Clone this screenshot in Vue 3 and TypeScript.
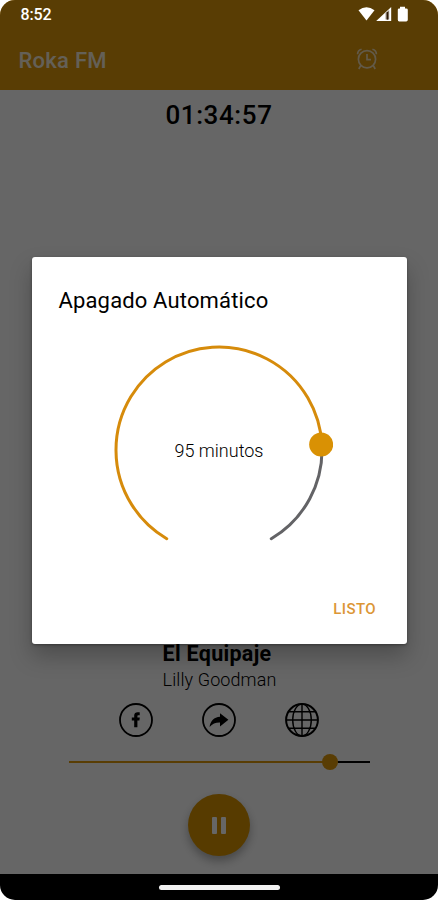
<script setup lang="ts">
import { computed, ref } from 'vue'

const minutes = ref(95)
const volume = ref(86.9)

const cx = 108
const cy = 108
const radius = 103

function pointAt(degrees: number): { x: number; y: number } {
  const rad = (degrees * Math.PI) / 180
  return { x: cx + radius * Math.cos(rad), y: cy + radius * Math.sin(rad) }
}

function arc(from: number, to: number): string {
  const a = pointAt(from)
  const b = pointAt(to)
  const large = to - from > 180 ? 1 : 0
  return `M${a.x} ${a.y}A${radius} ${radius} 0 ${large} 1 ${b.x} ${b.y}`
}

const startAngle = 120.5
const endAngle = 419.5
const angle = computed(() => startAngle + (minutes.value / 120) * 300 - 1)
const knob = computed(() => pointAt(angle.value))
</script>

<template>
  <div class="phone">
    <div class="status">
      <span class="clock">8:52</span>
      <svg class="signals" width="50" height="18" viewBox="0 0 50 18">
        <path d="M0.5 4.2Q8.5-1.6 16.5 4.2L8.5 14.6Z" fill="#fff" />
        <path d="M33.2 1V15H18.2Z" fill="#fff" />
        <path d="M27.6 7L31.2 4V13.6H27.6Z" fill="#8d7f70" />
        <rect x="28.8" y="6" width="1.4" height="7.6" fill="#2c1a08" />
        <path d="M42 0.8H47V2.4H48.2Q49.8 2.4 49.8 3.8V13.8Q49.8 15.4 48.2 15.4H41.2Q39.8 15.4 39.8 13.8V3.8Q39.8 2.4 41.2 2.4H42Z" fill="#fff" />
      </svg>
    </div>

    <header class="bar">
      <h1>Roka FM</h1>
      <svg class="alarm" width="24" height="24" viewBox="0 0 24 24">
        <g fill="none" stroke="#fff" stroke-width="1.7">
          <circle cx="12" cy="12.2" r="8.6" />
          <path d="M12 7V12.6H16" />
          <path d="M2.6 7.2Q2.6 3.2 6.6 2.2M21.4 7.2Q21.4 3.2 17.4 2.2" />
          <path d="M5.8 18.4L3.8 22M18.2 18.4L20.2 22" />
        </g>
      </svg>
    </header>

    <main class="player">
      <div class="timer">01:34:57</div>
      <div class="cover"></div>
      <div class="song">El Equipaje</div>
      <div class="artist">Lilly Goodman</div>

      <div class="links">
        <svg width="36" height="36" viewBox="0 0 36 36">
          <circle cx="18" cy="18" r="16" fill="none" stroke="#000" stroke-width="1.8" />
          <path d="M16.2 25.3V18.6H13.8V15.6H16.2V13.6C16.2 11 17.6 10.2 19.6 10.2H21.7V13.2H20.4C19.6 13.2 19.4 13.6 19.4 14.3V15.6H21.8L21.4 18.6H19.4V25.3Z" />
        </svg>
        <svg width="36" height="36" viewBox="0 0 36 36">
          <circle cx="18" cy="18" r="16" fill="none" stroke="#000" stroke-width="1.8" />
          <path d="M19 11.2L27.4 17.8L19 24.4V20.6C14.6 20.5 11.4 21.7 8.6 25C9.4 19 13 15.2 19 14.8Z" />
        </svg>
        <svg width="36" height="36" viewBox="0 0 36 36">
          <g fill="none" stroke="#000" stroke-width="1.4">
            <circle cx="18" cy="18" r="15.9" stroke-width="2" />
            <ellipse cx="18" cy="18" rx="9.3" ry="15.9" />
            <path d="M18 2V34M2 18H34M4.6 9.8H31.4M4.6 26.2H31.4" />
          </g>
        </svg>
      </div>

      <div class="slider">
        <div class="filled" :style="{ width: volume + '%' }"></div>
        <div class="thumb"></div>
        <div class="rest"></div>
      </div>

      <button class="pause" type="button" aria-label="Pausa">
        <span></span><span></span>
      </button>
    </main>

    <div class="scrim">
      <section class="dialog">
        <h2>Apagado Automático</h2>
        <div class="dial">
          <svg width="222" height="216" viewBox="0 0 222 216">
            <g fill="none" stroke-width="3" stroke-linecap="round">
              <path :d="arc(angle, endAngle)" stroke="#636366" />
              <path :d="arc(startAngle, angle)" stroke="#d68b0b" />
            </g>
            <circle :cx="knob.x - 0.7" :cy="knob.y" r="12" fill="#d99104" />
          </svg>
          <span class="minutes">{{ minutes }} minutos</span>
        </div>
        <button class="done" type="button">LISTO</button>
      </section>
    </div>

    <footer class="nav"><div class="pill"></div></footer>
  </div>
</template>

<style>
body {
  background: #fff;
}
</style>

<style scoped>
* {
  box-sizing: border-box;
}

.phone {
  position: relative;
  display: flex;
  flex-direction: column;
  width: 438px;
  height: 900px;
  overflow: hidden;
  border-radius: 15px;
  background: #fff;
  font-family: Roboto, sans-serif;
  color: #000;
}

h1,
h2 {
  margin: 0;
}

button {
  border: 0;
  padding: 0;
  font-family: inherit;
}

.status {
  position: relative;
  z-index: 2;
  display: flex;
  justify-content: space-between;
  align-items: center;
  height: 30px;
  padding: 0 30px 0 20.5px;
  color: #fff;
}

.clock {
  margin-top: -1px;
  font-size: 16px;
  font-weight: 500;
  letter-spacing: -0.1px;
}

.signals {
  margin-top: -1px;
}

.bar {
  display: flex;
  justify-content: space-between;
  align-items: center;
  height: 89.5px;
  margin-top: -30px;
  padding: 30px 59px 0 18.5px;
  background: #de980c;
}

.bar h1 {
  margin-top: 2px;
  font-size: 22px;
  line-height: 26px;
  font-weight: 500;
  letter-spacing: 0.25px;
  color: #fff;
  opacity: 0.85;
}

.alarm {
  margin-top: -2px;
  opacity: 0.7;
}

.player {
  display: flex;
  flex-direction: column;
  align-items: center;
  height: 784.5px;
}

.timer {
  margin-top: 9.5px;
  font-size: 26px;
  line-height: 32px;
  font-weight: 500;
  letter-spacing: 0.6px;
}

.cover {
  width: 278px;
  height: 508px;
}

.song {
  margin: 1px 4px -1px 0;
  font-size: 21.5px;
  line-height: 28px;
  font-weight: 700;
  letter-spacing: 0.3px;
}

.artist {
  margin-left: 1px;
  font-size: 18px;
  line-height: 26px;
  font-weight: 300;
  letter-spacing: 0.1px;
}

.links {
  display: flex;
  gap: 47px;
  margin-top: 9px;
}

.slider {
  display: flex;
  align-items: center;
  width: 301px;
  height: 16px;
  margin-top: 16px;
}

.filled {
  flex: none;
  height: 2.4px;
  background: #de980c;
}

.thumb {
  position: relative;
  flex: none;
  width: 16px;
  height: 16px;
  margin: 0 -8px;
  border-radius: 50%;
  background: #de980c;
}

.rest {
  flex: 1;
  height: 2.4px;
  background: #000;
}

.pause {
  display: flex;
  justify-content: center;
  align-items: center;
  gap: 4px;
  width: 62px;
  height: 62px;
  margin-top: 24px;
  border-radius: 50%;
  background: #d99400;
  box-shadow: 0 5px 10px rgba(0, 0, 0, 0.3);
}

.pause span {
  width: 5px;
  height: 17px;
  border-radius: 1px;
  background: #fff;
}

.scrim {
  position: absolute;
  inset: 0 0 26px;
  z-index: 1;
  padding: 257px 31px 0 31.5px;
  background: rgba(0, 0, 0, 0.6);
}

.dialog {
  display: flex;
  flex-direction: column;
  height: 386.5px;
  padding: 31px 32px 0 27px;
  border-radius: 3px;
  background: #fff;
  box-shadow: 0 12px 22px rgba(0, 0, 0, 0.25), 0 1px 3px rgba(0, 0, 0, 0.35);
}

.dialog h2 {
  font-size: 22px;
  line-height: 26px;
  font-weight: 400;
  letter-spacing: 0.15px;
}

.dial {
  display: grid;
  grid-template-columns: 216px;
  place-items: center;
  width: 216px;
  height: 216px;
  margin: 28px 0 0 52px;
}

.dial svg,
.minutes {
  grid-area: 1 / 1;
}

.dial svg {
  justify-self: start;
}

.minutes {
  padding-left: 1px;
  font-size: 18px;
  font-weight: 300;
}

.done {
  align-self: flex-end;
  margin: 41px -1px 0 0;
  background: none;
  font-size: 15px;
  line-height: 20px;
  font-weight: 500;
  letter-spacing: 0.4px;
  color: #dc9636;
}

.nav {
  display: flex;
  justify-content: center;
  align-items: center;
  height: 26px;
  background: #000;
}

.pill {
  width: 121px;
  height: 5px;
  border-radius: 3px;
  background: #f2f2f2;
}
</style>
